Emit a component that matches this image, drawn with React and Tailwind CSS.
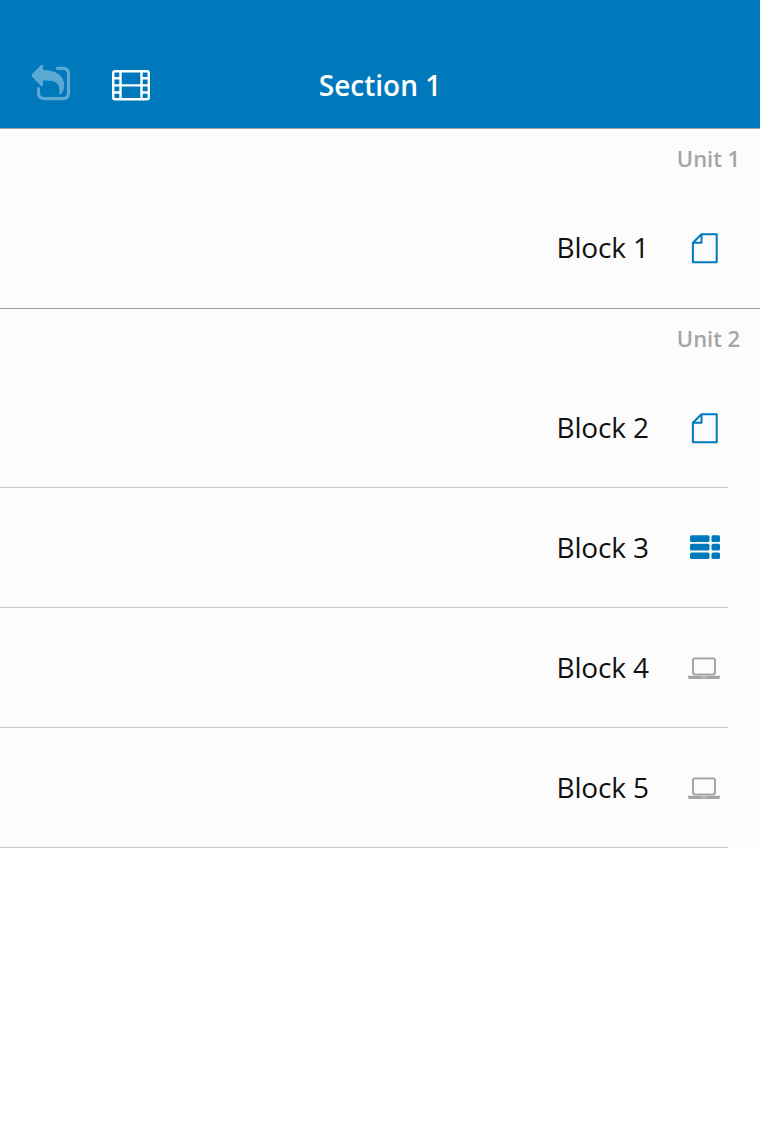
import React from "react";

const FileIcon = () => (
  <svg width="34" height="34" viewBox="688 231 34 34" fill="none" stroke="#0079bc" strokeWidth="2" strokeLinejoin="round">
    <path d="M701.5 234.2h15.2v28h-23.8v-19.5z" />
    <path d="M701.5 234.5v8.3h-8.3" />
  </svg>
);

const GridIcon = () => (
  <svg width="34" height="34" viewBox="688 531 34 34" fill="#0079bc">
    {[535.2, 543.8, 552.4].map((y) => (
      <g key={y}>
        <rect x="690" y={y} width="19.5" height="6.7" rx="1.5" />
        <rect x="711.5" y={y} width="8.5" height="6.7" rx="1.5" />
      </g>
    ))}
  </svg>
);

const LaptopIcon = () => (
  <svg width="34" height="34" viewBox="688 651 34 34">
    <rect x="693" y="658.4" width="22" height="16" rx="1.8" fill="none" stroke="#a5a5a5" strokeWidth="2" />
    <path d="M688 675.8h32v1.5q0 1.7-2 1.7h-28q-2 0-2-1.7z" fill="#a5a5a5" />
    <path d="M702 677.3h4" stroke="#d8d8d8" strokeWidth="0.8" />
  </svg>
);

const Block = ({ label, icon, divider = true }) => (
  <div className="h-[120px] pr-8">
    <div className={`flex h-full items-center justify-end pr-[6px] ${divider ? "border-b border-[#c8c7cc]" : ""}`}>
      <span className="mr-[39px] pb-[2px] text-[28px] leading-10 tracking-[-0.12px] text-[#111]">{label}</span>
      {icon}
    </div>
  </div>
);

const UnitTitle = ({ children }) => (
  <h2 className="h-[59px] pr-5 text-right text-[22px] leading-[58px] font-semibold tracking-[-0.05px] text-[#a5a5a5]">{children}</h2>
);

export default function App() {
  return (
    <div className="min-h-[1136px] bg-white font-['Open_Sans','Noto_Sans',sans-serif]">
      <header className="grid h-32 grid-cols-3 items-center bg-[#0079bc] pt-[42px] text-white">
        <div className="flex items-center gap-[40px] pl-8">
          <svg width="40" height="40" viewBox="32 65 40 40" opacity="0.36">
            <path d="M38.5 88.5v4.500q0 5.700 5.700 5.700h18.600q5.700 0 5.700-5.700V74q0-5.700-5.700-5.700h-5.300" fill="none" stroke="white" strokeWidth="3.2" strokeLinecap="round" />
            <path d="M32 74.300L41.200 64.800q1.800-1.300 1.800 1v4.100c15.500 0 22.500 8 21 17.100-.4 4-2 6.300-3.700 7.200-.8.500-1.500.2-1.200-1 1.500-9.700-2.200-13.200-16.100-12.700v4.500q0 2.200-1.800.9l-9.200-9.200q-.8-1.200 0-2.400z" fill="white" />
          </svg>
          <svg width="40" height="40" viewBox="112 65 40 40" fill="none" stroke="white" strokeWidth="2.4">
            <rect x="113.2" y="71.3" width="35.6" height="28" rx="2" />
            <path d="M120.5 71v28M141.5 71v28M120.5 85.400h21M113 78.200h7M113 85.400h7M113 92.500h7M142 78.200h7M142 85.400h7M142 92.500h7" />
          </svg>
        </div>
        <h1 className="text-center text-[28px] font-semibold">Section 1</h1>
      </header>
      <main className="bg-[#fcfcfc]">
        <section className="border-t border-[#a1a1a1]">
          <UnitTitle>Unit 1</UnitTitle>
          <Block label="Block 1" icon={<FileIcon />} divider={false} />
        </section>
        <section className="border-t border-[#a1a1a1]">
          <UnitTitle>Unit 2</UnitTitle>
          <Block label="Block 2" icon={<FileIcon />} />
          <Block label="Block 3" icon={<GridIcon />} />
          <Block label="Block 4" icon={<LaptopIcon />} />
          <Block label="Block 5" icon={<LaptopIcon />} />
        </section>
      </main>
    </div>
  );
}
